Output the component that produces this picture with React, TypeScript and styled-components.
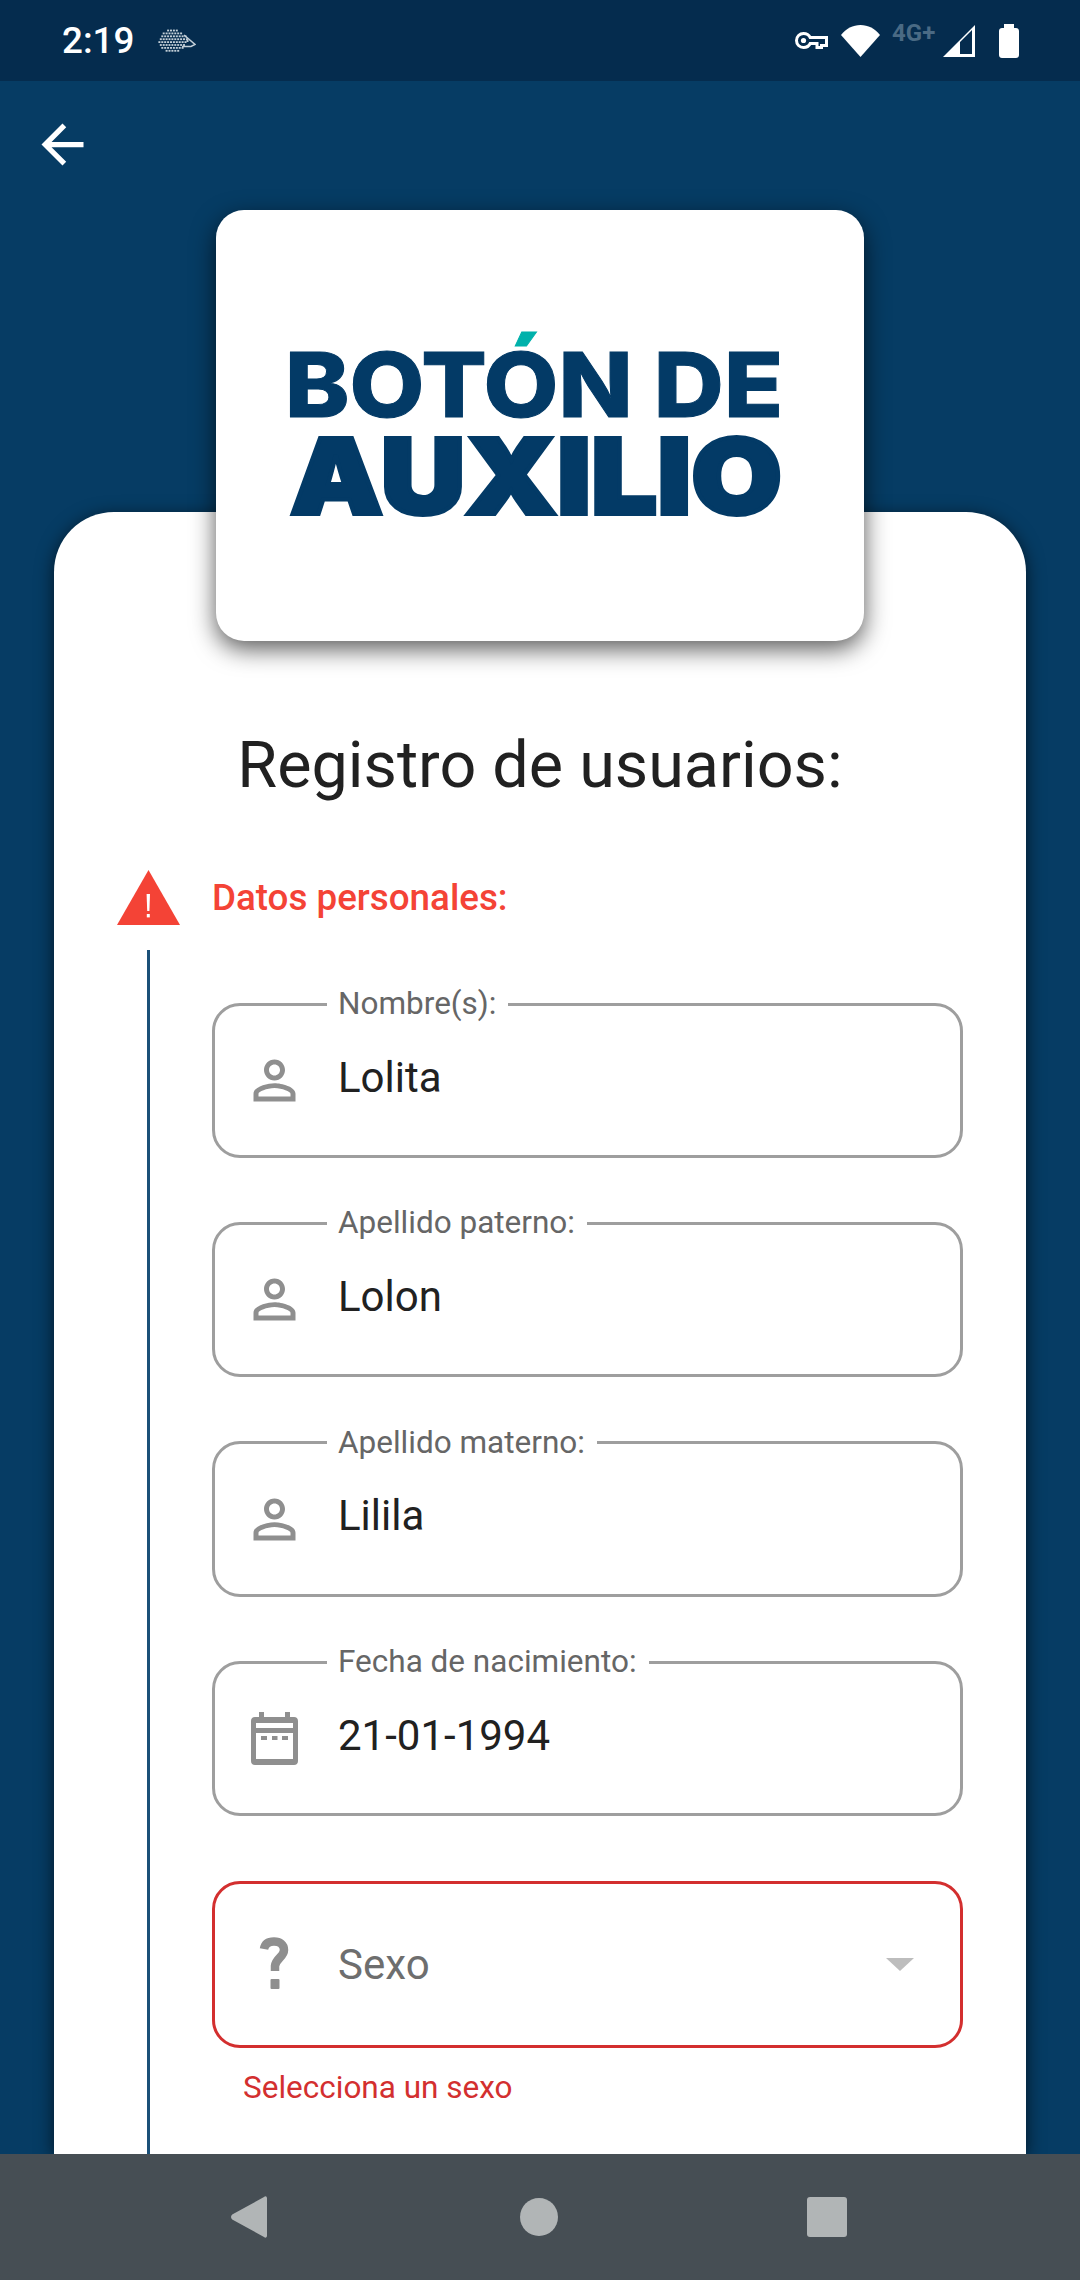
import styled, { createGlobalStyle } from 'styled-components';

const GlobalStyle = createGlobalStyle`
  html, body {
    margin: 0;
    padding: 0;
    background: #063c64;
  }
  * {
    box-sizing: border-box;
  }
`;

// status bar glyphs
function Hedgehog() {
  const dots: { x: number; y: number }[] = [];
  for (let row = 0; row < 8; row++) {
    for (let col = 0; col < 10; col++) {
      const x = col * 2.9 + (row % 2) * 1.4 + 0.4;
      const y = row * 2.9 + 0.6;
      const dx = (x - 14) / 14.5;
      const dy = (y - 11) / 11.5;
      if (dx * dx + dy * dy <= 1) dots.push({ x, y });
    }
  }
  return (
    <svg width="38" height="23" viewBox="0 0 38 23">
      {dots.map((d) => (
        <rect key={`${d.x}-${d.y}`} x={d.x} y={d.y} width="2" height="1.8" fill="#c3cfd8" />
      ))}
      <path d="M26 6 L37 15.5 L33 17.5 H24" fill="none" stroke="#c3cfd8" strokeWidth="1.5" />
      <rect x="28.5" y="11" width="2" height="2" fill="#c3cfd8" />
    </svg>
  );
}

function KeyGlyph() {
  return (
    <svg width="33" height="17" viewBox="0 0 33 17">
      <path
        d="M8.5 1.5 C11.5 1.5 14 3 15.2 5.5 H31.5 V13.5 H26.5 V15.5 H22 V11.5 H15.2 C14 14 11.5 15.5 8.5 15.5 C4.6 15.5 1.5 12.4 1.5 8.5 C1.5 4.6 4.6 1.5 8.5 1.5 Z"
        fill="none"
        stroke="#fff"
        strokeWidth="3"
      />
      <circle cx="8.5" cy="8.5" r="2.6" fill="#fff" />
    </svg>
  );
}

function WifiGlyph() {
  return (
    <svg width="39" height="32" viewBox="0 0 39 32">
      <path d="M0 10 C5 3.5 12 0 19.5 0 C27 0 34 3.5 39 10 L19.5 32 Z" fill="#fff" />
    </svg>
  );
}

function SignalGlyph() {
  return (
    <svg width="32" height="32" viewBox="0 0 32 32">
      <path fillRule="evenodd" d="M0 32 L32 0 V32 Z M17 29 H29 V5 L17 17 Z" fill="#fff" />
    </svg>
  );
}

function BatteryGlyph() {
  return (
    <svg width="20" height="34" viewBox="0 0 20 34">
      <path d="M5 0 H15 V4 H17 C18.7 4 20 5.3 20 7 V31 C20 32.7 18.7 34 17 34 H3 C1.3 34 0 32.7 0 31 V7 C0 5.3 1.3 4 3 4 H5 Z" fill="#fff" />
    </svg>
  );
}

function BackArrow() {
  return (
    <svg width="63" height="63" viewBox="0 0 24 24">
      <path d="M20 11H7.83l5.59-5.59L12 4l-8 8 8 8 1.41-1.41L7.83 13H20v-2z" fill="#fff" />
    </svg>
  );
}

function PersonIcon() {
  return (
    <svg width="63" height="63" viewBox="0 0 24 24">
      <path
        d="M12 5.9c1.16 0 2.1.94 2.1 2.1s-.94 2.1-2.1 2.1S9.9 9.16 9.9 8s.94-2.1 2.1-2.1m0 9c2.97 0 6.1 1.46 6.1 2.1v1.1H5.9V17c0-.64 3.13-2.1 6.1-2.1M12 4C9.79 4 8 5.79 8 8s1.79 4 4 4 4-1.79 4-4-1.79-4-4-4zm0 9c-2.67 0-8 1.34-8 4v3h16v-3c0-2.66-5.33-4-8-4z"
        fill="#8f8f8f"
      />
    </svg>
  );
}

function CalendarIcon() {
  return (
    <svg width="63" height="63" viewBox="0 0 63 63">
      <path
        fillRule="evenodd"
        d="M16 5 H21 V10 H42 V5 H47 V10 H51 C53.5 10 55 11.5 55 14 V54 C55 56.5 53.5 58 51 58 H12 C9.5 58 8 56.5 8 54 V14 C8 11.5 9.5 10 12 10 H16 Z M13 16 V21 H50 V16 Z M13 26 V52 H50 V26 Z"
        fill="#8f8f8f"
      />
      <rect x="18" y="29" width="6" height="4" fill="#8f8f8f" />
      <rect x="29" y="29" width="5.5" height="4" fill="#8f8f8f" />
      <rect x="39" y="29" width="6" height="4" fill="#8f8f8f" />
    </svg>
  );
}

function QuestionIcon() {
  return (
    <svg width="63" height="63" viewBox="0 0 63 63">
      <path
        d="M21 16 C22 10 26 8.5 31 8.5 C37 8.5 41 11.5 41 17 C41 24 33 25 32 33 V38"
        fill="none"
        stroke="#8f8f8f"
        strokeWidth="8.5"
      />
      <rect x="27.5" y="46" width="9" height="10" rx="1" fill="#8f8f8f" />
    </svg>
  );
}

function WarningIcon() {
  return (
    <svg width="63" height="55" viewBox="0 0 63 55">
      <path d="M31.5 0 L63 55 H0 Z" fill="#f44336" />
      <path d="M29.6 24 H33 L32.4 41 H30.2 Z" fill="#fff" />
      <rect x="29.8" y="44" width="3" height="3.4" fill="#fff" />
    </svg>
  );
}

// the accent of the Ó is the only thing above cap height, so a hard stop colours it
function Logo() {
  return (
    <LogoSvg viewBox="0 0 648 431" role="img">
      <defs>
        <linearGradient id="accent" gradientUnits="userSpaceOnUse" x1="0" y1="0" x2="0" y2="431">
          <stop offset="0.323" stopColor="#00b1ab" />
          <stop offset="0.323" stopColor="#033a66" />
        </linearGradient>
      </defs>
      <LogoText $weight={800} x="69" y="207" fontSize="90" textLength="498" lengthAdjust="spacingAndGlyphs" fill="url(#accent)" stroke="url(#accent)" strokeWidth="1">
        BOTÓN DE
      </LogoText>
      <LogoText $weight={900} x="74" y="304" fontSize="105" textLength="492" lengthAdjust="spacingAndGlyphs" fill="#033a66" stroke="#033a66" strokeWidth="4">
        AUXILIO
      </LogoText>
    </LogoSvg>
  );
}

export default function App() {
  const fields = [
    { label: 'Nombre(s):', value: 'Lolita', icon: <PersonIcon /> },
    { label: 'Apellido paterno:', value: 'Lolon', icon: <PersonIcon /> },
    { label: 'Apellido materno:', value: 'Lilila', icon: <PersonIcon /> },
    { label: 'Fecha de nacimiento:', value: '21-01-1994', icon: <CalendarIcon /> },
  ];

  return (
    <Page>
      <GlobalStyle />
      <StatusBar>
        <StatusLeft>
          <Clock>2:19</Clock>
          <Hedgehog />
        </StatusLeft>
        <StatusRight>
          <KeyGlyph />
          <WifiGlyph />
          <NetworkLabel>4G+</NetworkLabel>
          <SignalGlyph />
          <BatteryGlyph />
        </StatusRight>
      </StatusBar>

      <Main>
        <BackRow>
          <BackArrow />
        </BackRow>
        <LogoCard>
          <Logo />
        </LogoCard>
        <FormCard>
          <Title>Registro de usuarios:</Title>
          <Stepper>
            <WarningIcon />
            <StepTitle>Datos personales:</StepTitle>
            <StepLine />
            <Fields>
              {fields.map((f) => (
                <Field key={f.label}>
                  <FieldLegend>{f.label}</FieldLegend>
                  <FieldRow>
                    {f.icon}
                    <FieldValue>{f.value}</FieldValue>
                  </FieldRow>
                </Field>
              ))}
              <SelectBox>
                <QuestionIcon />
                <SelectText>Sexo</SelectText>
                <Caret />
              </SelectBox>
              <ErrorText>Selecciona un sexo</ErrorText>
            </Fields>
          </Stepper>
        </FormCard>
      </Main>

      <NavBar>
        <svg width="37" height="42" viewBox="0 0 37 42">
          <path d="M36 2.5 V39.5 C36 41.5 34.5 42.5 33 41 L1.2 23.5 C-0.4 22 -0.4 20 1.2 18.5 L33 1 C34.5 -0.5 36 0.5 36 2.5 Z" fill="#b1b5b6" />
        </svg>
        <NavCircle />
        <NavSquare />
      </NavBar>
    </Page>
  );
}

const Page = styled.div`
  width: 1080px;
  height: 2280px;
  display: flex;
  flex-direction: column;
  overflow: hidden;
  background: #063c64;
  font-family: Roboto, 'Liberation Sans', sans-serif;
`;

const StatusBar = styled.div`
  height: 81px;
  flex: none;
  display: flex;
  align-items: center;
  justify-content: space-between;
  padding: 0 61px 0 62px;
  background: #052c4e;
`;

const StatusLeft = styled.div`
  display: flex;
  align-items: center;
  gap: 24px;
`;

const Clock = styled.span`
  font-size: 36.75px;
  font-weight: 500;
  color: #fff;
`;

const StatusRight = styled.div`
  display: flex;
  align-items: center;
  svg:nth-of-type(2) {
    margin-left: 13px;
  }
  svg:nth-of-type(4) {
    margin-left: 24px;
  }
`;

const NetworkLabel = styled.span`
  width: 44px;
  margin: 0 7px 16px 12px;
  font-size: 24px;
  line-height: 24px;
  font-weight: 700;
  color: #4a6a84;
`;

const Main = styled.div`
  flex: 1;
  min-height: 0;
  display: flex;
  flex-direction: column;
`;

const BackRow = styled.div`
  display: flex;
  flex: none;
  padding: 32px 0 0 31px;
`;

const LogoCard = styled.div`
  position: relative;
  z-index: 1;
  flex: none;
  align-self: center;
  width: 648px;
  height: 431px;
  margin: 34px 0 -129px;
  background: #fff;
  border-radius: 28px;
  box-shadow: 0 8px 24px rgba(0, 0, 0, 0.65);
`;

const LogoSvg = styled.svg`
  display: block;
  width: 648px;
  height: 431px;
`;

const LogoText = styled.text<{ $weight: number }>`
  font-family: Inter, Roboto, sans-serif;
  font-weight: ${(props) => props.$weight};
`;

const FormCard = styled.div`
  flex: 1;
  min-height: 0;
  margin: 0 54px;
  padding: 216px 63px 0 63px;
  background: #fff;
  border-radius: 60px 60px 0 0;
  box-shadow: 0 4px 18px rgba(0, 0, 0, 0.65);
  overflow: hidden;
`;

const Title = styled.h1`
  margin: 0 0 68px;
  font-size: 64.7px;
  line-height: 74px;
  font-weight: 400;
  text-align: center;
  color: #212121;
`;

const Stepper = styled.div`
  display: grid;
  grid-template-columns: 63px 1fr;
  column-gap: 32px;
  row-gap: 25px;
`;

const StepTitle = styled.div`
  align-self: center;
  font-size: 36.75px;
  line-height: 44px;
  font-weight: 500;
  color: #f44336;
`;

const StepLine = styled.div`
  justify-self: center;
  width: 3px;
  background: #1b5078;
`;

const Fields = styled.div`
  display: flex;
  flex-direction: column;
  gap: 47.4px;
  padding: 36px 0 60px;
`;

const Field = styled.fieldset`
  margin: 0;
  padding: 0;
  min-width: 0;
  height: 172px;
  border: 3px solid #9e9e9e;
  border-radius: 28px;
`;

const FieldLegend = styled.legend`
  margin-left: 112px;
  padding: 0 12px 0 11px;
  font-size: 31.5px;
  line-height: 36px;
  color: #666;
`;

const FieldRow = styled.div`
  display: flex;
  align-items: center;
  gap: 32px;
  padding: 27px 28px 0;
`;

const FieldValue = styled.div`
  font-size: 42px;
  line-height: 50px;
  margin-top: -6px;
  color: #212121;
`;

const SelectBox = styled.div`
  display: flex;
  align-items: center;
  gap: 32px;
  height: 167px;
  margin-top: 17.6px;
  padding: 0 46px 0 28px;
  border: 3px solid #d32f2f;
  border-radius: 28px;
`;

const SelectText = styled.div`
  flex: 1;
  font-size: 42px;
  color: #6e6e6e;
`;

const Caret = styled.div`
  width: 0;
  height: 0;
  border-left: 14px solid transparent;
  border-right: 14px solid transparent;
  border-top: 13px solid #bdbdbd;
`;

const ErrorText = styled.div`
  margin: -27px 0 0 31px;
  font-size: 31.5px;
  line-height: 38px;
  color: #d32f2f;
`;

const NavBar = styled.div`
  position: relative;
  z-index: 2;
  flex: none;
  height: 126px;
  display: flex;
  align-items: center;
  gap: 252px;
  padding-left: 231px;
  background: #464e54;
`;

const NavCircle = styled.div`
  width: 38px;
  height: 38px;
  border-radius: 50%;
  background: #b1b5b6;
`;

const NavSquare = styled.div`
  width: 40px;
  height: 40px;
  margin-left: -3px;
  border-radius: 3px;
  background: #b1b5b6;
`;
